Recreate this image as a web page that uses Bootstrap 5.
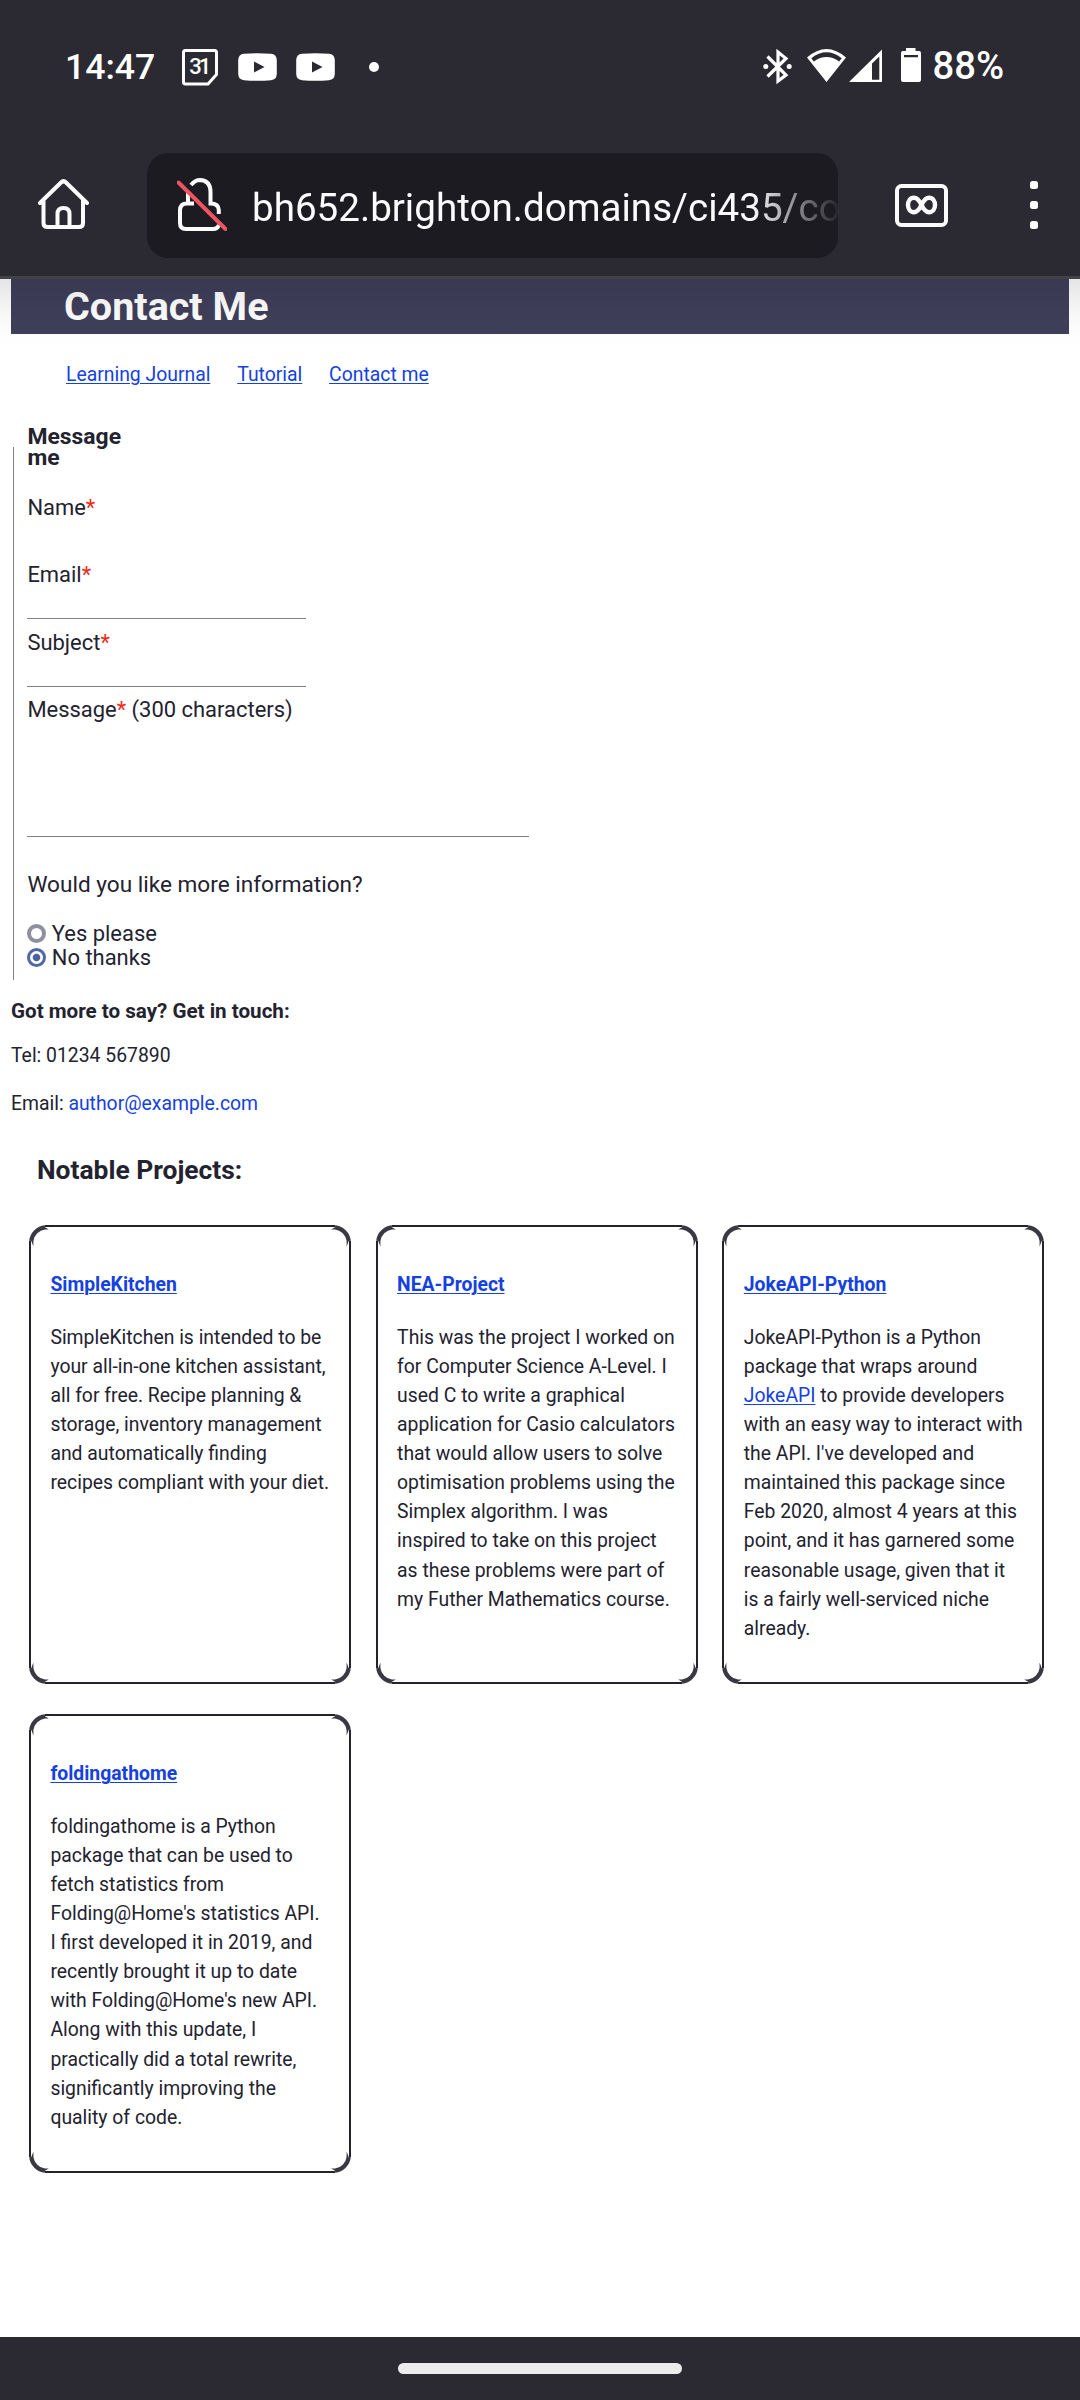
<!DOCTYPE html>
<html lang="en">
<head>
<meta charset="utf-8">
<meta name="viewport" content="width=device-width, initial-scale=1">
<title>Contact Me</title>
<link rel="stylesheet" href="https://cdn.jsdelivr.net/npm/bootstrap@5.3.0/dist/css/bootstrap.min.css">
<style>
  body { font-family: Roboto, "Liberation Sans", sans-serif; font-size: 19.37px; line-height: 29.05px; color: #23222f; background: #fff; }
  svg { display: block; flex: none; }
  a { color: #1441df; text-decoration-thickness: 1px; text-underline-offset: 2px; }
  .screen { width: 1080px; height: 2400px; }
  .chrome-top { height: 279px; background: #2b2a33; border-bottom: 3px solid #434247; color: #fff; }
  .status-row { height: 134px; padding: 0 76px 0 65px; }
  .clock { font-size: 35.6px; font-weight: 500; line-height: 40px; }
  .battery-text { font-size: 38.2px; font-weight: 500; line-height: 40px; margin: -2px 0 0 11px; }
  .tool-row { height: 142px; padding: 0 40px 0 38px; }
  .address { width: 691px; height: 105px; margin-left: 58px; padding-left: 30px; border-radius: 21px; background: #1c1b22; }
  .address-text { flex: none; width: 600px; margin-left: 25px; padding-top: 6px; font-size: 38.6px; line-height: 50px; color: #fbfbfe;
    -webkit-mask-image: linear-gradient(90deg, #000 500px, transparent 590px); mask-image: linear-gradient(90deg, #000 500px, transparent 590px); }
  .page-shade { height: 72px; top: 0; background: linear-gradient(rgba(0,0,0,.1), rgba(0,0,0,.035) 45%, rgba(0,0,0,.008) 75%, transparent); pointer-events: none; }
  .page-title { height: 55px; margin: 0 11px; padding-left: 53px; background: #3f3f5b; color: #fff; font-size: 39.5px; font-weight: 700; line-height: 55px; }
  .site-nav { padding: 26px 0 0 66px; gap: 26.8px; }
  .message-form { display: flow-root; width: 620px; height: 533px; margin: 58px 0 0 13px; padding-left: 13.4px; border-left: 1px solid #808080; font-size: 21.95px; line-height: 24px; }
  .form-heading { width: 110px; height: 42px; margin: -21px 0 28px; font-size: 22.9px; font-weight: 700; line-height: 21px; }
  .field { height: 67.3px; }
  .field label, .field-long label { display: block; }
  .star { color: #ee2a1a; }
  .line-input { width: 279px; height: 32px; padding: 0; border: 0; border-bottom: 1px solid #808080; border-radius: 0; background: transparent; }
  .line-input.no-rule { border-bottom-color: transparent; }
  textarea.line-input { width: 502px; height: 115px; min-height: 0; resize: none; }
  .question { margin: 36px 0 25px; font-size: 22.6px; }
  .choice { height: 24px; min-height: 0; padding: 0; margin: 0; gap: 5.4px; }
  .form-check .round-input { float: none; width: 19px; height: 19px; margin: 0; border: 4px solid #8f8f9d; background: #fff; }
  .form-check .round-input:checked { border: 3px solid #5069a4; background: radial-gradient(circle, #4a629f 0 3.2px, #fff 4.3px); }
  .touch { padding-left: 11px; }
  .touch h2 { margin: 19px 0 18px; font-size: 20.6px; font-weight: 700; line-height: 24px; }
  .touch p { margin: 0 0 19px; }
  .projects-title { margin: 37px 0 40px 37px; font-size: 26.4px; font-weight: 700; line-height: 30px; }
  .project-list { padding-left: 29px; column-gap: 24.7px; row-gap: 30px; }
  .project { width: 322px; height: 459px; padding: 43px 12px 0 19.4px; border: 2px solid #23222f; border-radius: 0; background: #fff;
    border-image: url("data:image/svg+xml,%3Csvg xmlns='http://www.w3.org/2000/svg' width='48' height='48'%3E%3Cg fill='none' stroke='%2323222f'%3E%3Cpath stroke-width='2' d='M16 1h16M16 47h16M1 16v16M47 16v16'/%3E%3Cpath stroke-width='4.2' d='M2.3 16C3 9 9 3 16 2.3M32 2.300C39 3 45 9 45.700 16M45.700 32C45 39 39 45 32 45.700M16 45.700C9 45 3 39 2.300 32' stroke-opacity='.9'/%3E%3C/g%3E%3C/svg%3E") 16 / 16px stretch; }
  .project h3 { margin: 0 0 24px; font-size: 19.35px; font-weight: 700; line-height: 29px; }
  .project p { margin: 0; }
  .gesture-bar { height: 63px; background: #2b2a33; padding-top: 26px; }
  .pill { width: 284px; height: 11px; border-radius: 6px; background: #ececec; }
</style>
<script src="https://cdn.jsdelivr.net/npm/bootstrap@5.3.0/dist/js/bootstrap.bundle.min.js"></script>
</head>
<body>
<div class="screen d-flex flex-column overflow-hidden">
  <header class="chrome-top flex-shrink-0">
    <div class="status-row d-flex align-items-center justify-content-between">
      <div class="d-flex align-items-center">
        <span class="clock">14:47</span>
        <svg style="margin-left:26px" width="38" height="40" viewBox="181 47 38 40">
          <path d="M183.500 52.500Q183.500 50.500 185.500 50.500H214.500Q216.500 50.500 216.500 52.500V74.500L208 84H185.500Q183.500 84 183.500 82Z" fill="none" stroke="#fff" stroke-width="3" stroke-linejoin="round"/>
          <text x="200.300" y="74" fill="#fff" font-family="Roboto" font-weight="500" font-size="22" text-anchor="middle" textLength="22">31</text>
        </svg>
        <svg style="margin-left:19px" width="39" height="28" viewBox="0 0 39 28"><path fill="#fff" fill-rule="evenodd" d="M6 .8Q19.500-.5 33 .8Q38.500 1.300 38.800 7V21Q38.500 26.700 33 27.200Q19.500 28.500 6 27.200Q.5 26.700.2 21V7Q.5 1.300 6 .8ZM16 8.500V19.500L26.500 14Z"/></svg>
        <svg style="margin-left:19px" width="39" height="28" viewBox="0 0 39 28"><path fill="#fff" fill-rule="evenodd" d="M6 .8Q19.500-.5 33 .8Q38.500 1.300 38.800 7V21Q38.500 26.700 33 27.200Q19.500 28.500 6 27.200Q.5 26.700.2 21V7Q.5 1.300 6 .8ZM16 8.500V19.500L26.500 14Z"/></svg>
        <svg style="margin-left:34px" width="10" height="10" viewBox="0 0 10 10"><circle cx="5" cy="5" r="5" fill="#fff"/></svg>
      </div>
      <div class="d-flex align-items-center">
        <svg width="158" height="40" viewBox="763 47 158 40">
          <g fill="none" stroke="#fff" stroke-width="3.200"><path d="M767.500 56.500L786 75L778 81V52L786 58.500L767.500 76.500"/></g>
          <g fill="#fff"><circle cx="765.800" cy="66.500" r="2.500"/><circle cx="789.200" cy="66.500" r="2.500"/>
          <path fill-rule="evenodd" d="M807 57.500Q826.500 40.500 846 57.500L826.500 82ZM811.300 58.200L813.800 61.400Q826.500 52.500 839.200 61.400L841.700 58.200Q826.500 46.500 811.300 58.200Z"/>
          <path fill-rule="evenodd" d="M849 82L882 49.500V82ZM872 63.500V79.800H879.300V56.500Z"/>
          <path fill-rule="evenodd" d="M906 51V48H915.500V51H919Q921 51 921 53V80Q921 82 919 82H903Q901 82 901 80V53Q901 51 903 51ZM904 55V57.200H918V55Z"/></g>
        </svg>
        <span class="battery-text">88%</span>
      </div>
    </div>
    <div class="tool-row d-flex align-items-center">
      <svg width="51" height="54" viewBox="38 179 51 54" fill="none" stroke="#fbfbfe" stroke-width="4" stroke-linecap="round" stroke-linejoin="round">
        <path d="M40 204L61 183.500Q63.500 181 66 183.500L87 204M43.500 201.500V224Q43.500 228 47.500 228H79Q83 228 83 224V201.500M57.500 227V215Q57.500 209 63.500 209Q69.500 209 69.500 215V227"/>
      </svg>
      <div class="address d-flex align-items-center">
        <svg width="50" height="54" viewBox="177 179 50 54" fill="none" stroke="#fbfbfe" stroke-width="4" stroke-linecap="butt">
          <path d="M191 186Q195 181 200 181Q210.500 181.500 210.500 193V204.500Q218.500 204.500 218.800 211V215M188 194V204.500M194 204.500H187Q180 204.500 180 211.500V224Q180 230 186 230H213Q217.500 230 219 226"/>
          <path d="M178.500 183.500L225.500 230" stroke="#ee5560" stroke-linecap="round"/>
        </svg>
        <div class="address-text text-nowrap">bh652.brighton.domains/ci435/co</div>
      </div>
      <svg style="margin-left:57px" width="53" height="43" viewBox="0 0 53 43" fill="none" stroke="#fbfbfe" stroke-width="4">
        <rect x="2" y="2" width="49" height="39" rx="4.500"/>
        <path stroke-width="4.400" d="M26.500 21C23.500 15 21 13.800 19 13.800C11 13.800 11 28.200 19 28.200C21 28.200 23.500 27 26.500 21C29.500 15 32 13.800 34 13.800C42 13.800 42 28.200 34 28.200C32 28.200 29.500 27 26.500 21Z"/>
      </svg>
      <svg style="margin-left:82px" width="8" height="48" viewBox="0 0 8 48" fill="#fbfbfe"><rect width="8" height="8" y="0" rx="2.500"/><rect width="8" height="8" y="20" rx="2.500"/><rect width="8" height="8" y="40" rx="2.500"/></svg>
    </div>
  </header>

  <main class="flex-grow-1 position-relative overflow-hidden">
    <h1 class="page-title">Contact Me</h1>
    <div class="page-shade position-absolute start-0 end-0"></div>
    <nav class="site-nav d-flex">
      <a href="#">Learning Journal</a><a href="#">Tutorial</a><a href="#">Contact me</a>
    </nav>

    <form class="message-form">
      <h2 class="form-heading">Message me</h2>
      <div class="field"><label for="name">Name<span class="star">*</span></label><input id="name" class="form-control line-input no-rule"></div>
      <div class="field"><label for="email">Email<span class="star">*</span></label><input id="email" class="form-control line-input"></div>
      <div class="field"><label for="subject">Subject<span class="star">*</span></label><input id="subject" class="form-control line-input"></div>
      <div class="field-long"><label for="msg">Message<span class="star">*</span> (300 characters)</label><textarea id="msg" class="form-control line-input"></textarea></div>
      <p class="question">Would you like more information?</p>
      <div class="form-check choice d-flex align-items-center"><input class="form-check-input round-input" type="radio" name="info" id="yes"><label for="yes">Yes please</label></div>
      <div class="form-check choice d-flex align-items-center"><input class="form-check-input round-input" type="radio" name="info" id="no" checked><label for="no">No thanks</label></div>
    </form>

    <section class="touch">
      <h2>Got more to say? Get in touch:</h2>
      <p>Tel: 01234 567890</p>
      <p>Email: <a class="text-decoration-none" href="#">author@example.com</a></p>
    </section>

    <h2 class="projects-title">Notable Projects:</h2>
    <section class="project-list d-flex flex-wrap">
      <article class="project"><h3><a href="#">SimpleKitchen</a></h3>
        <p>SimpleKitchen is intended to be<br>your all-in-one kitchen assistant,<br>all for free. Recipe planning &amp;<br>storage, inventory management<br>and automatically finding<br>recipes compliant with your diet.</p></article>
      <article class="project"><h3><a href="#">NEA-Project</a></h3>
        <p>This was the project I worked on<br>for Computer Science A-Level. I<br>used C to write a graphical<br>application for Casio calculators<br>that would allow users to solve<br>optimisation problems using the<br>Simplex algorithm. I was<br>inspired to take on this project<br>as these problems were part of<br>my Futher Mathematics course.</p></article>
      <article class="project"><h3><a href="#">JokeAPI-Python</a></h3>
        <p>JokeAPI-Python is a Python<br>package that wraps around<br><a href="#">JokeAPI</a> to provide developers<br>with an easy way to interact with<br>the API. I've developed and<br>maintained this package since<br>Feb 2020, almost 4 years at this<br>point, and it has garnered some<br>reasonable usage, given that it<br>is a fairly well-serviced niche<br>already.</p></article>
      <article class="project"><h3><a href="#">foldingathome</a></h3>
        <p>foldingathome is a Python<br>package that can be used to<br>fetch statistics from<br>Folding@Home's statistics API.<br>I first developed it in 2019, and<br>recently brought it up to date<br>with Folding@Home's new API.<br>Along with this update, I<br>practically did a total rewrite,<br>significantly improving the<br>quality of code.</p></article>
    </section>
  </main>

  <footer class="gesture-bar flex-shrink-0"><div class="pill mx-auto"></div></footer>
</div>
</body>
</html>
